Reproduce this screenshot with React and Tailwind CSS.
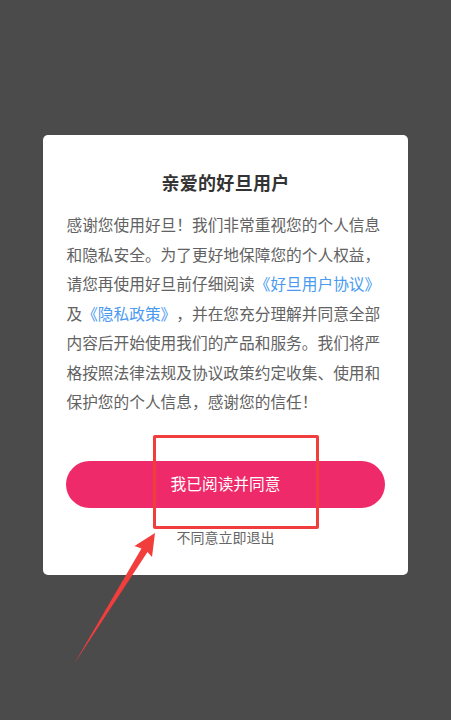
import React from "react";

const font = { fontFamily: '"Noto Sans CJK SC", "Noto Sans", sans-serif' };

export default function App() {
  return (
    <div
      className="relative w-[451px] h-[720px] bg-[#4b4b4b] overflow-hidden [text-spacing-trim:space-all]"
      style={font}
    >
      <div className="pt-[135px] pl-[43px]">
        <div className="w-[365px] h-[440px] bg-white rounded-[5px] flex flex-col items-center pt-[34px]">
          <div className="text-[18px] leading-[26px] font-bold text-[#333333] tracking-[0.3px]">
            亲爱的好旦用户
          </div>
          <div className="mt-[15px] w-[318px] text-[15.7px] leading-[29.5px] text-[#626262] whitespace-nowrap">
            <div>感谢您使用好旦！我们非常重视您的个人信息</div>
            <div>和隐私安全。为了更好地保障您的个人权益，</div>
            <div>
              请您再使用好旦前仔细阅读
              <span className="text-[#4a9af0]">《好旦用户协议》</span>
            </div>
            <div>
              及<span className="text-[#4a9af0]">《隐私政策》</span>，并在您充分理解并同意全部
            </div>
            <div>内容后开始使用我们的产品和服务。我们将严</div>
            <div>格按照法律法规及协议政策约定收集、使用和</div>
            <div>保护您的个人信息，感谢您的信任！</div>
          </div>
          <button className="mt-[44px] w-[319px] h-[47px] rounded-full bg-[#ef2a6b] text-white text-[15.7px] flex items-center justify-center">
            我已阅读并同意
          </button>
          <div className="mt-[19px] text-[14px] leading-[20px] text-[#666666]">
            不同意立即退出
          </div>
        </div>
      </div>

      <div className="absolute left-[153px] top-[435px] w-[166px] h-[94px] border-[3px] border-[#f23d3d] rounded-[2px] pointer-events-none" />

      <svg
        className="absolute left-0 top-0 pointer-events-none"
        width="451"
        height="720"
        viewBox="0 0 451 720"
      >
        <polygon
          points="155,533 152,557 147.5,552 74,664 141.5,548.5 134.5,546"
          fill="#f23d3d"
        />
      </svg>
    </div>
  );
}
